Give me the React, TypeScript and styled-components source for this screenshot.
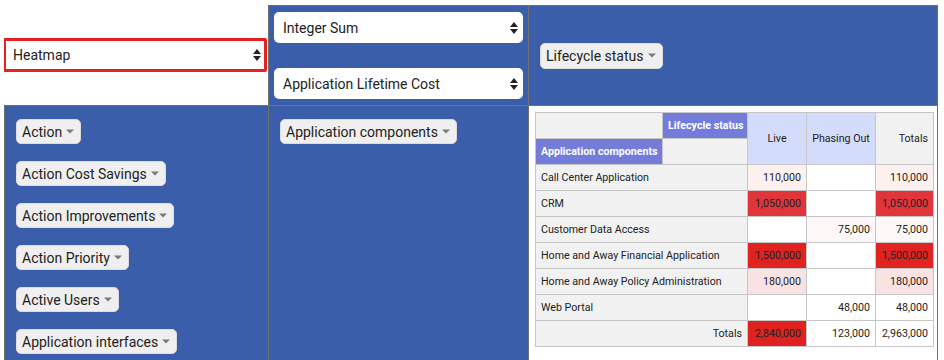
import React from 'react';
import styled, { createGlobalStyle } from 'styled-components';

// blue panels #3b5eab, grid lines #707070

const GlobalStyle = createGlobalStyle`
  body {
    margin: 0;
    background: #fff;
    font-family: Roboto, "Liberation Sans", sans-serif;
    color: #222;
  }
`;

const PivotUi = styled.div`
  display: grid;
  grid-template-columns: 264px 260px 410px;
  grid-template-rows: 100px 1fr;
  height: 355px;
  margin: 5px 0 0 4px;
  overflow: hidden;
`;

const RendererCell = styled.div`
  display: flex;
  align-items: center;
`;

const Panel = styled.div<{ $last?: boolean; $white?: boolean }>`
  background: ${p => (p.$white ? '#fff' : '#3b5eab')};
  border-left: 1px solid #707070;
  border-top: 1px solid #707070;
  border-right: ${p => (p.$last ? '1px solid #707070' : 'none')};
  min-height: 0;
  overflow: hidden;
`;

const AggregatorPanel = styled(Panel)`
  display: flex;
  flex-direction: column;
  gap: 25px;
  padding: 6px 5px 5px 5px;
`;

const ColAxisPanel = styled(Panel)`
  display: flex;
  align-items: center;
  padding-left: 11px;
`;

const AttrList = styled(Panel)`
  display: flex;
  flex-direction: column;
  align-items: flex-start;
  gap: 17px;
  padding: 13px 11px 0;
`;

const OutputPanel = styled(Panel)`
  padding: 6px 6px 0;
`;

const SelectBox = styled.div<{ $active?: boolean }>`
  position: relative;
  box-sizing: border-box;
  width: ${p => (p.$active ? '264px' : '249px')};
  height: ${p => (p.$active ? '34px' : '31px')};
  margin-left: ${p => (p.$active ? '-1px' : '0')};
  border: ${p => (p.$active ? '3px solid #e02222' : 'none')};
  border-radius: ${p => (p.$active ? '2px' : '5px')};
  background: #fff;
`;

const NativeSelect = styled.select<{ $active?: boolean }>`
  appearance: none;
  width: 100%;
  height: 100%;
  border: none;
  outline: none;
  background: transparent;
  border-radius: 5px;
  padding: 0 24px 0 ${p => (p.$active ? '7px' : '9px')};
  font-family: Roboto, "Liberation Sans", sans-serif;
  font-size: 14px;
  color: #222;
`;

const SelectArrows = styled.svg<{ $active?: boolean }>`
  position: absolute;
  right: ${p => (p.$active ? '3px' : '5px')};
  top: 50%;
  transform: translateY(-50%);
  pointer-events: none;
`;

const Chip = styled.span<{ $tall?: boolean }>`
  display: inline-flex;
  flex-shrink: 0;
  align-items: center;
  gap: 4px;
  box-sizing: border-box;
  height: ${p => (p.$tall ? '26px' : '25px')};
  padding: 0 6px 0 5px;
  background: #efefef;
  border: 1px solid #dcdcdc;
  border-radius: 5px;
  font-size: 14px;
  color: #222;
  white-space: nowrap;
`;

const PivotTable = styled.table`
  border-collapse: collapse;
  table-layout: fixed;
  width: 398px;
  font-size: 8pt;
  line-height: 13px;
  color: #222;
`;

const Col = styled.col<{ $w: number }>`
  width: ${p => p.$w}px;
`;

type Tone = 'gray' | 'axis' | 'col';

const toneBg: Record<Tone, string> = {
  gray: '#f1f1f1',
  axis: '#737cd9',
  col: '#d4dcfb',
};

const Th = styled.th<{ $tone: Tone; $align?: string }>`
  background: ${p => toneBg[p.$tone]};
  color: ${p => (p.$tone === 'axis' ? '#fff' : '#222')};
  font-weight: ${p => (p.$tone === 'axis' ? 700 : 400)};
  text-align: ${p => p.$align || 'left'};
  vertical-align: middle;
  border: 1px solid #c6c6c6;
  padding: 6px 5px;
  white-space: nowrap;
`;

const Td = styled.td`
  text-align: right;
  border: 1px solid #c6c6c6;
  padding: 6px 5px;
  white-space: nowrap;
`;

type Cell = [string, string];

const data: { label: string; cells: Cell[] }[] = [
  { label: 'Call Center Application', cells: [['110,000', '#fdf0ef'], ['', '#fff'], ['110,000', '#fdf0ef']] },
  { label: 'CRM', cells: [['1,050,000', '#e1353c'], ['', '#fff'], ['1,050,000', '#e1353c']] },
  { label: 'Customer Data Access', cells: [['', '#fff'], ['75,000', '#fdf8f7'], ['75,000', '#fdf8f7']] },
  { label: 'Home and Away Financial Application', cells: [['1,500,000', '#df2321'], ['', '#fff'], ['1,500,000', '#df2321']] },
  { label: 'Home and Away Policy Administration', cells: [['180,000', '#f9e2e2'], ['', '#fff'], ['180,000', '#f9e2e2']] },
  { label: 'Web Portal', cells: [['', '#fff'], ['48,000', '#fff'], ['48,000', '#fff']] },
];

const totals: Cell[] = [['2,840,000', '#df211f'], ['123,000', '#fff'], ['2,963,000', '#fff']];

const unused = [
  'Action',
  'Action Cost Savings',
  'Action Improvements',
  'Action Priority',
  'Active Users',
  'Application interfaces',
];

const Caret = () => (
  <svg width="8" height="5" viewBox="0 0 8 5">
    <path d="M0 0.5h8L4 4.5z" fill="#7a7a7a" />
  </svg>
);

const Dropdown = ({ value, active }: { value: string; active?: boolean }) => (
  <SelectBox $active={active}>
    <NativeSelect $active={active} defaultValue={value}>
      <option>{value}</option>
    </NativeSelect>
    <SelectArrows $active={active} width="8" height="13" viewBox="0 0 8 13">
      <path d="M0 5.5L4 0.5L8 5.5z" fill="#222" />
      <path d="M0 7.5L4 12.5L8 7.5z" fill="#222" />
    </SelectArrows>
  </SelectBox>
);

const Attr = ({ name, tall }: { name: string; tall?: boolean }) => (
  <Chip $tall={tall}>
    {name}
    <Caret />
  </Chip>
);

const App = () => {
  return (
    <>
      <GlobalStyle />
      <PivotUi>
        <RendererCell>
          <Dropdown value="Heatmap" active />
        </RendererCell>

        <AggregatorPanel>
          <Dropdown value="Integer Sum" />
          <Dropdown value="Application Lifetime Cost" />
        </AggregatorPanel>

        <ColAxisPanel $last>
          <Attr name="Lifecycle status" tall />
        </ColAxisPanel>

        <AttrList>
          {unused.map(name => (
            <Attr key={name} name={name} />
          ))}
        </AttrList>

        <AttrList>
          <Attr name="Application components" />
        </AttrList>

        <OutputPanel $white $last>
          <PivotTable>
            <colgroup>
              <Col $w={127} />
              <Col $w={85} />
              <Col $w={59} />
              <Col $w={69} />
              <Col $w={58} />
            </colgroup>
            <thead>
              <tr>
                <Th $tone="gray" />
                <Th $tone="axis">Lifecycle status</Th>
                <Th $tone="col" $align="center" rowSpan={2}>Live</Th>
                <Th $tone="col" $align="center" rowSpan={2}>Phasing Out</Th>
                <Th $tone="gray" $align="right" rowSpan={2}>Totals</Th>
              </tr>
              <tr>
                <Th $tone="axis">Application components</Th>
                <Th $tone="gray" />
              </tr>
            </thead>
            <tbody>
              {data.map(row => (
                <tr key={row.label}>
                  <Th $tone="gray" colSpan={2}>{row.label}</Th>
                  {row.cells.map(([v, bg], i) => (
                    <Td key={i} style={{ background: bg }}>{v}</Td>
                  ))}
                </tr>
              ))}
              <tr>
                <Th $tone="gray" $align="right" colSpan={2}>Totals</Th>
                {totals.map(([v, bg], i) => (
                  <Td key={i} style={{ background: bg }}>{v}</Td>
                ))}
              </tr>
            </tbody>
          </PivotTable>
        </OutputPanel>
      </PivotUi>
    </>
  );
};

export default App;
